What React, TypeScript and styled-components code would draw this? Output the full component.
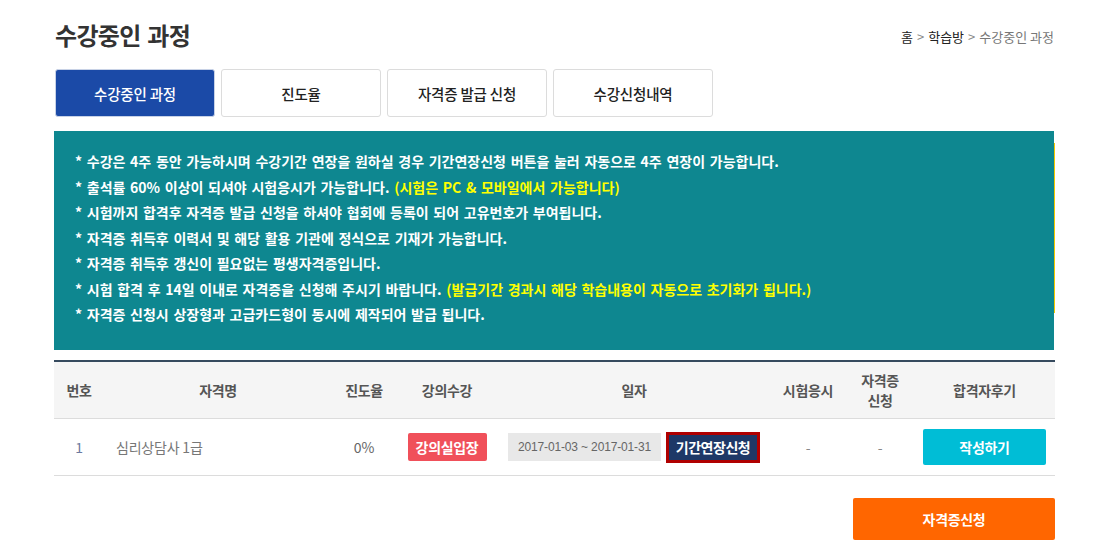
import React from "react";
import styled, { createGlobalStyle } from "styled-components";

const GlobalStyle = createGlobalStyle`
  html, body {
    margin: 0;
    padding: 0;
    background: #fff;
    font-family: "Noto Sans CJK KR", "Noto Sans", sans-serif;
    color: #333;
  }
`;

const Page = styled.div`
  width: 1001px;
  margin-left: 54px;
`;

const Header = styled.div`
  height: 69px;
  display: flex;
  align-items: center;
  justify-content: space-between;
`;

const Title = styled.h2`
  margin: 0 0 0 1px;
  font-size: 24px;
  font-weight: 700;
  letter-spacing: -0.7px;
  word-spacing: 2px;
  color: #333;
  line-height: 1;
`;

const Crumbs = styled.div`
  display: flex;
  align-items: center;
  gap: 4px;
  font-size: 13px;
  letter-spacing: 0;
  padding-top: 3px;
  margin-right: 1px;
`;

const Crumb = styled.span<{ $current?: boolean }>`
  color: ${(p) => (p.$current ? "#777" : "#222")};
`;

const Sep = styled.span`
  color: #888;
`;

const Tabs = styled.div`
  display: flex;
  gap: 6px;
  margin: 0 0 14px 1px;
`;

const Tab = styled.div<{ $active?: boolean }>`
  width: 160px;
  height: 48px;
  box-sizing: border-box;
  display: flex;
  align-items: center;
  justify-content: center;
  border-radius: 3px;
  font-size: 14.5px;
  font-weight: 500;
  letter-spacing: -0.2px;
  background: ${(p) => (p.$active ? "#1b4aa7" : "#fff")};
  color: ${(p) => (p.$active ? "#fff" : "#222")};
  border: 1px solid ${(p) => (p.$active ? "#c8d2e6" : "#dcdcdc")};
`;

const Notice = styled.div`
  position: relative;
  width: 1000px;
  height: 219px;
  box-sizing: border-box;
  background: #0e8790;
  padding: 18px 20px 0 21px;
  &::after {
    content: "";
    position: absolute;
    right: -1px;
    top: 12px;
    bottom: 37px;
    width: 1px;
    background: #f2c800;
  }
`;

const Line = styled.p`
  margin: 0;
  color: #fff;
  font-size: 14px;
  font-weight: 700;
  line-height: 25.5px;
  letter-spacing: 0;
  word-spacing: 1.5px;
  white-space: nowrap;
`;

const Hi = styled.span`
  color: #ffff00;
`;

const Table = styled.table`
  width: 1001px;
  margin-top: 10px;
  border-collapse: collapse;
  table-layout: fixed;
  border-top: 2px solid #364a5e;
`;

const Th = styled.th`
  height: 56px;
  padding: 0;
  background: #f5f5f5;
  border-bottom: 1px solid #dcdcdc;
  font-size: 14px;
  font-weight: 700;
  color: #555;
  line-height: 20px;
  letter-spacing: -0.3px;
`;

const Td = styled.td<{ $align?: string; $color?: string }>`
  height: 56px;
  padding: 0;
  border-bottom: 1px solid #dcdcdc;
  text-align: ${(p) => p.$align || "center"};
  font-size: 14px;
  color: ${(p) => p.$color || "#666"};
  letter-spacing: -0.2px;
  ${(p) => (p.$align === "left" ? "padding-left: 12px;" : "")}
`;

const DateCell = styled.div`
  display: flex;
  align-items: center;
  justify-content: center;
  gap: 5px;
`;

const DateBox = styled.span`
  width: 153px;
  height: 28px;
  display: inline-flex;
  align-items: center;
  justify-content: center;
  background: #e8e8e8;
  color: #666;
  font-family: "Liberation Sans", sans-serif;
  font-size: 12px;
  letter-spacing: -0.15px;
`;

const SmallButton = styled.span<{ $bg: string; $h: number; $w: number }>`
  display: inline-flex;
  align-items: center;
  justify-content: center;
  box-sizing: border-box;
  width: ${(p) => p.$w}px;
  height: ${(p) => p.$h}px;
  background: ${(p) => p.$bg};
  color: #fff;
  font-size: 14px;
  font-weight: 700;
  letter-spacing: -0.3px;
  border-radius: 2px;
`;

const ExtendButton = styled.span`
  display: inline-flex;
  align-items: center;
  justify-content: center;
  box-sizing: border-box;
  width: 94px;
  height: 31px;
  background: #1e3867;
  border: 3px solid #b00000;
  color: #fff;
  font-size: 14px;
  font-weight: 700;
  letter-spacing: -0.5px;
`;

const Footer = styled.div`
  display: flex;
  justify-content: flex-end;
  margin-top: 22px;
`;

const ApplyButton = styled.button`
  width: 202px;
  height: 42px;
  border: none;
  border-radius: 2px;
  background: #ff6600;
  color: #fff;
  font-family: "Noto Sans CJK KR", sans-serif;
  font-size: 14px;
  font-weight: 700;
  letter-spacing: -0.3px;
`;

const tabs = ["수강중인 과정", "진도율", "자격증 발급 신청", "수강신청내역"];
const cols = [50, 228, 64, 102, 272, 76, 68, 141];

export default function App() {
  return (
    <Page>
      <GlobalStyle />
      <Header>
        <Title>수강중인 과정</Title>
        <Crumbs>
          <Crumb>홈</Crumb>
          <Sep>&gt;</Sep>
          <Crumb>학습방</Crumb>
          <Sep>&gt;</Sep>
          <Crumb $current>수강중인 과정</Crumb>
        </Crumbs>
      </Header>
      <Tabs>
        {tabs.map((t, i) => (
          <Tab key={t} $active={i === 0}>
            {t}
          </Tab>
        ))}
      </Tabs>
      <Notice>
        <Line>* 수강은 4주 동안 가능하시며 수강기간 연장을 원하실 경우 기간연장신청 버튼을 눌러 자동으로 4주 연장이 가능합니다.</Line>
        <Line>
          * 출석률 60% 이상이 되셔야 시험응시가 가능합니다. <Hi>(시험은 PC &amp; 모바일에서 가능합니다)</Hi>
        </Line>
        <Line>* 시험까지 합격후 자격증 발급 신청을 하셔야 협회에 등록이 되어 고유번호가 부여됩니다.</Line>
        <Line>* 자격증 취득후 이력서 및 해당 활용 기관에 정식으로 기재가 가능합니다.</Line>
        <Line>* 자격증 취득후 갱신이 필요없는 평생자격증입니다.</Line>
        <Line>
          * 시험 합격 후 14일 이내로 자격증을 신청해 주시기 바랍니다.{" "}
          <Hi>(발급기간 경과시 해당 학습내용이 자동으로 초기화가 됩니다.)</Hi>
        </Line>
        <Line>* 자격증 신청시 상장형과 고급카드형이 동시에 제작되어 발급 됩니다.</Line>
      </Notice>
      <Table>
        <colgroup>
          {cols.map((w, i) => (
            <col key={i} style={{ width: w }} />
          ))}
        </colgroup>
        <thead>
          <tr>
            <Th>번호</Th>
            <Th>자격명</Th>
            <Th>진도율</Th>
            <Th>강의수강</Th>
            <Th>일자</Th>
            <Th>시험응시</Th>
            <Th>
              자격증
              <br />
              신청
            </Th>
            <Th>합격자후기</Th>
          </tr>
        </thead>
        <tbody>
          <tr>
            <Td $color="#6b7aa0">1</Td>
            <Td $align="left" $color="#777">심리상담사 1급</Td>
            <Td>0%</Td>
            <Td>
              <SmallButton $bg="#f0505a" $w={79} $h={28}>강의실입장</SmallButton>
            </Td>
            <Td>
              <DateCell>
                <DateBox>2017-01-03 ~ 2017-01-31</DateBox>
                <ExtendButton>기간연장신청</ExtendButton>
              </DateCell>
            </Td>
            <Td $color="#888">-</Td>
            <Td $color="#888">-</Td>
            <Td>
              <SmallButton $bg="#00bdd6" $w={123} $h={36}>작성하기</SmallButton>
            </Td>
          </tr>
        </tbody>
      </Table>
      <Footer>
        <ApplyButton>자격증신청</ApplyButton>
      </Footer>
    </Page>
  );
}
